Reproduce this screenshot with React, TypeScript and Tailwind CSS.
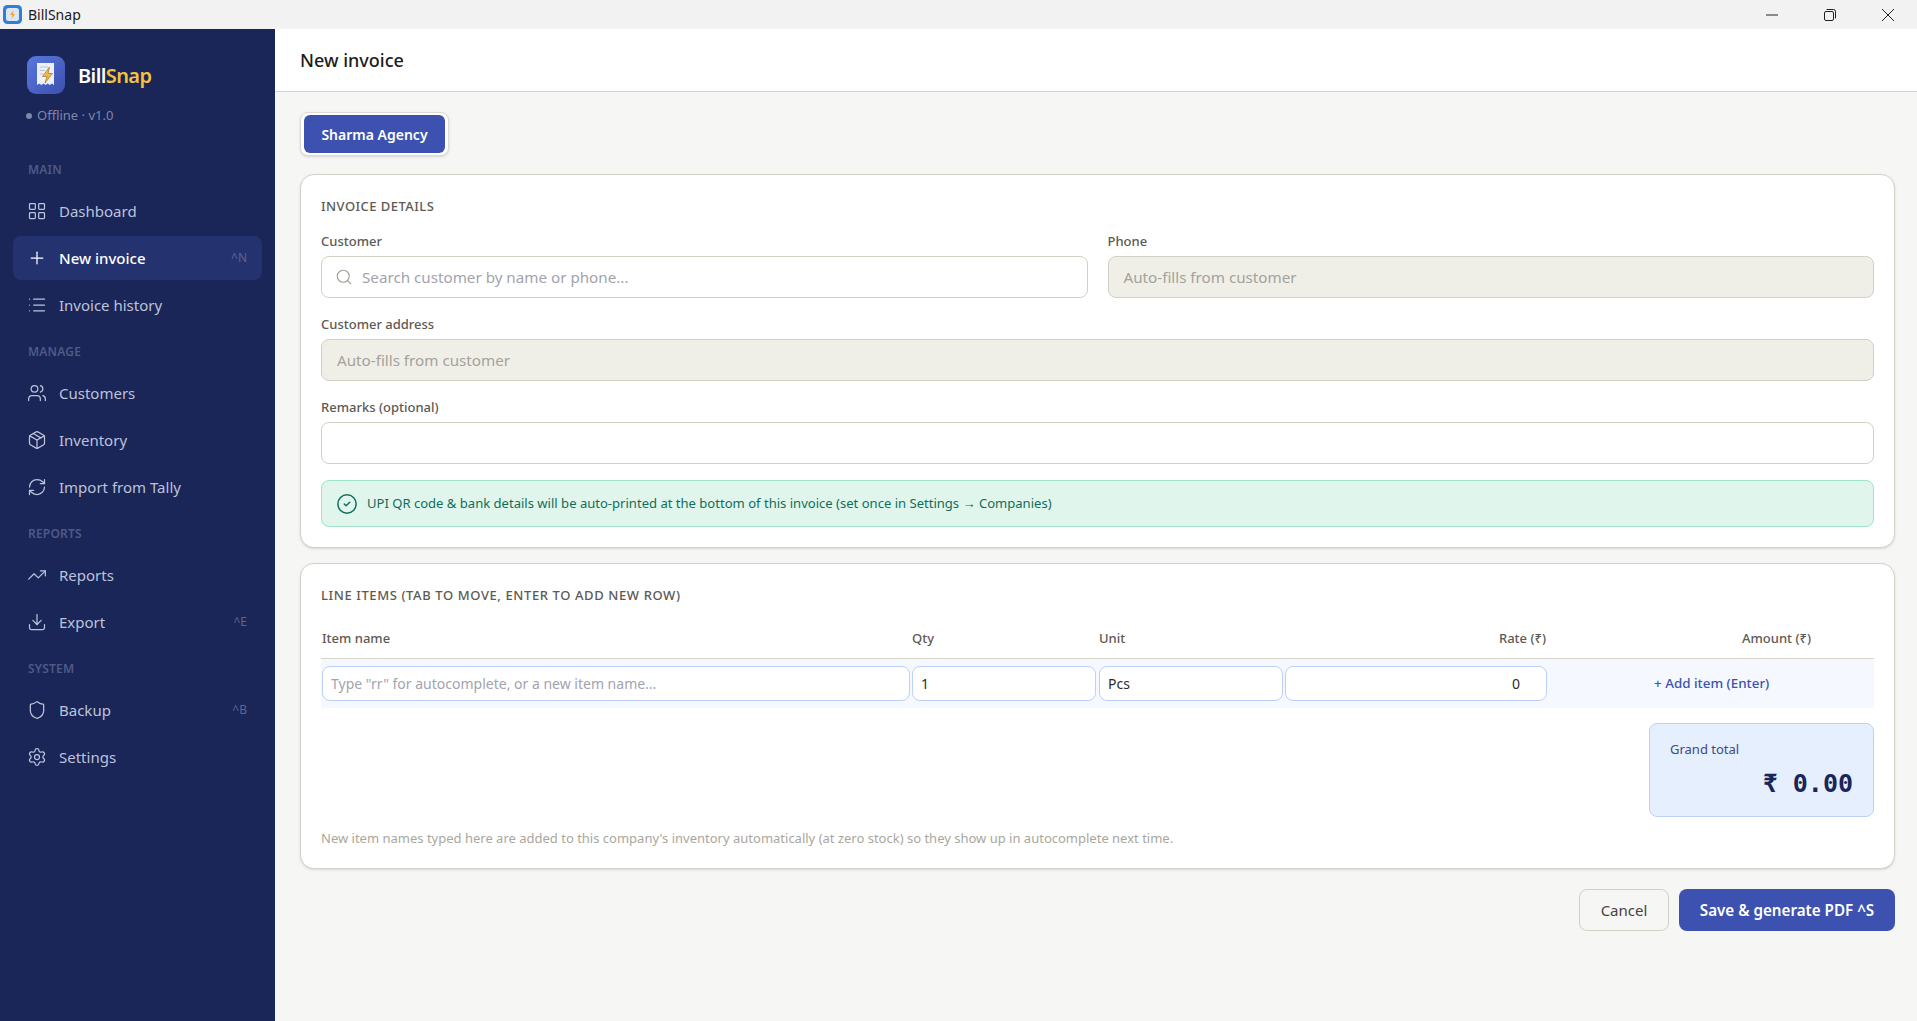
import React from "react";
import { LayoutGrid, Plus, List, Users, Package, RefreshCw, TrendingUp, Download, Shield, Settings, Search, CircleCheck } from "lucide-react";

const Logo = ({ size }: { size: number }) => (
  <svg width={size} height={size} viewBox="0 0 38 38">
    <defs>
      <linearGradient id={`g${size}`} x1="0" y1="0" x2="1" y2="1">
        <stop offset="0" stopColor="#5a78e0" />
        <stop offset="1" stopColor="#3c50ad" />
      </linearGradient>
    </defs>
    <rect width="38" height="38" rx="9" fill={`url(#g${size})`} />
    <path d="M10 7h17v22l-2.1-1.6-2.1 1.6-2.1-1.6-2.1 1.6-2.1-1.6-2.1 1.6L12 27.4 10 29z" fill="#eef0f8" />
    <path d="M13 11h8M13 14.5h5M13 18h3" stroke="#b9c2e0" strokeWidth="1.2" />
    <path d="M22.5 11 15.5 20.5h4.5l-2 6.5 7.5-9.5h-4.5z" fill="#f2bd3d" stroke="#8a6a1c" strokeWidth=".6" />
  </svg>
);

const AppIcon = () => (
  <svg width="19" height="19" viewBox="0 0 19 19">
    <rect width="19" height="19" rx="4.5" fill="#2f7fd6" />
    <rect x="3" y="3" width="13" height="13" rx="2.5" fill="#dbe7f6" />
    <path d="M10.5 5 7 10h2.4l-1 4 3.7-5H9.7z" fill="#e8a43a" />
  </svg>
);

type Item = { icon: React.ElementType; label: string; key?: string; active?: boolean };
const sections: { title: string; items: Item[] }[] = [
  { title: "MAIN", items: [
    { icon: LayoutGrid, label: "Dashboard" },
    { icon: Plus, label: "New invoice", key: "^N", active: true },
    { icon: List, label: "Invoice history" },
  ] },
  { title: "MANAGE", items: [
    { icon: Users, label: "Customers" },
    { icon: Package, label: "Inventory" },
    { icon: RefreshCw, label: "Import from Tally" },
  ] },
  { title: "REPORTS", items: [
    { icon: TrendingUp, label: "Reports" },
    { icon: Download, label: "Export", key: "^E" },
  ] },
  { title: "SYSTEM", items: [
    { icon: Shield, label: "Backup", key: "^B" },
    { icon: Settings, label: "Settings" },
  ] },
];

const Label = ({ children }: { children: React.ReactNode }) => (
  <div className="text-[13px] leading-[18px] font-medium text-[#5c5a54] mb-[6px]">{children}</div>
);

const fieldReadonly = "h-[42px] rounded-[8px] border border-[#d1d0c5] bg-[#f0efe7] px-[15px] flex items-center text-[15.2px] text-[#a3a29c]";

const cellInput = "h-[35px] rounded-[8px] border border-[#bcd0f8] bg-white flex items-center text-[14px]";

export default function App() {
  return (
    <div className="w-[1917px] h-[1021px] flex flex-col overflow-hidden font-['Noto_Sans',sans-serif] bg-[#f6f6f4]">
      <div className="h-[29px] shrink-0 bg-[#f2f2f2] flex items-center">
        <div className="ml-[3px] w-[19px] h-[19px]"><AppIcon /></div>
        <span className="ml-[6px] text-[14px] text-[#1a1a1a]">BillSnap</span>
        <div className="ml-auto flex items-center">
          <div className="w-[58px] flex justify-center">
            <svg width="12" height="12" viewBox="0 0 12 12" stroke="#222" strokeWidth="1"><path d="M0 6h12" /></svg>
          </div>
          <div className="w-[58px] flex justify-center">
            <svg width="12" height="12" viewBox="0 0 12 12" fill="none" stroke="#222" strokeWidth="1">
              <rect x="0.5" y="2.5" width="9" height="9" rx="1.5" />
              <path d="M2.6.5h6.9a2 2 0 0 1 2 2v6.9" />
            </svg>
          </div>
          <div className="w-[58px] flex justify-center">
            <svg width="12" height="12" viewBox="0 0 12 12" stroke="#222" strokeWidth="1"><path d="M0 0l12 12M12 0L0 12" /></svg>
          </div>
        </div>
      </div>
      <div className="flex-1 flex min-h-0">
        <aside className="w-[275px] shrink-0 bg-[#1a2558] px-[13px] pt-[27px]">
          <div className="flex items-center gap-[13px] pl-[14px]">
            <Logo size={38} />
            <span className="text-[20px] font-semibold tracking-[-0.6px] leading-[38px] translate-y-[1px] text-white">Bill<span className="text-[#f5c23e]">Snap</span></span>
          </div>
          <div className="flex items-center gap-[5px] pl-[13px] mt-[13px] h-[18px] text-[13px] text-[#7e87a8]">
            <span className="w-[6px] h-[6px] rounded-full bg-[#7e87a8]" />Offline · v1.0
          </div>
          <div className="mt-[23px]">
            {sections.map((s, i) => (
              <div key={s.title}>
                <div className={`pl-[15px] h-[16px] leading-[16px] text-[12px] font-semibold tracking-[0.2px] text-[#4e5a87] ${i === 0 ? "mt-[37px] mb-[11px]" : "mt-[17px] mb-[11px]"}`}>{s.title}</div>
                {s.items.map((it) => {
                  const Icon = it.icon;
                  return (
                    <div key={it.label} className={`h-[44px] mb-[3px] rounded-[8px] flex items-center pl-[14px] pr-[15px] ${it.active ? "bg-[#243270] text-white" : "text-[#bcc3da]"}`}>
                      <Icon size={20} strokeWidth={1.5} className="shrink-0" />
                      <span className={`ml-[12px] text-[15px] ${it.active ? "font-medium" : ""}`}>{it.label}</span>
                      {it.key && <span className="ml-auto text-[12px] text-[#5a6690]">{it.key}</span>}
                    </div>
                  );
                })}
              </div>
            ))}
          </div>
        </aside>
        <main className="flex-1 min-w-0">
          <header className="h-[63px] bg-white border-b border-[#d4d3c9] flex items-center pl-[25px]">
            <h1 className="text-[18px] font-medium text-[#1c1c1a]">New invoice</h1>
          </header>
          <div className="px-[25px] pr-[22px] pt-[20px]">
            <div className="inline-flex px-[3px] py-[2px] rounded-[8px] bg-white border border-[#dcdbd3] shadow-sm align-top">
              <div className="h-[38px] w-[141px] rounded-[6px] bg-[#3d52b0] text-white text-[14px] font-semibold flex items-center justify-center">Sharma Agency</div>
            </div>
            <section className="mt-[18px] h-[374px] rounded-[14px] bg-white border border-[#d4d3c9] shadow-sm px-[20px] pt-[19px]">
              <div className="text-[13px] leading-[24px] font-medium tracking-[0.45px] text-[#5c5a54]">INVOICE DETAILS</div>
              <div className="grid grid-cols-2 gap-x-[20px] mt-[14px]">
                <div>
                  <Label>Customer</Label>
                  <div className="h-[42px] rounded-[8px] border border-[#d1d0c5] bg-white flex items-center pl-[13px]">
                    <Search size={18} strokeWidth={1.5} className="text-[#a3a29c]" />
                    <span className="ml-[9px] text-[15.2px] text-[#a3a3ae]">Search customer by name or phone...</span>
                  </div>
                </div>
                <div>
                  <Label>Phone</Label>
                  <div className={fieldReadonly}>Auto-fills from customer</div>
                </div>
              </div>
              <div className="mt-[17px]">
                <Label>Customer address</Label>
                <div className={fieldReadonly}>Auto-fills from customer</div>
              </div>
              <div className="mt-[17px]">
                <Label>Remarks (optional)</Label>
                <div className="h-[42px] rounded-[8px] border border-[#d1d0c5] bg-white" />
              </div>
              <div className="mt-[16px] h-[47px] rounded-[8px] border border-[#9fe3c9] bg-[#e0f6ed] flex items-center pl-[14px] text-[13.05px] text-[#0f6e5a]">
                <CircleCheck size={22} strokeWidth={1.6} />
                <span className="ml-[9px]">UPI QR code &amp; bank details will be auto-printed at the bottom of this invoice (set once in Settings → Companies)</span>
              </div>
            </section>
            <section className="mt-[15px] h-[306px] rounded-[14px] bg-white border border-[#d4d3c9] shadow-sm px-[20px] pt-[19px]">
              <div className="text-[13px] leading-[24px] font-medium tracking-[0.6px] text-[#5c5a54]">LINE ITEMS (TAB TO MOVE, ENTER TO ADD NEW ROW)</div>
              <div className="mt-[12px] h-[40px] border-b border-[#d4d3c9] grid grid-cols-[590px_187px_187px_262px_1fr] items-center text-[13px] font-medium text-[#5c5a54]">
                <div className="pl-[1px]">Item name</div>
                <div className="pl-[1px]">Qty</div>
                <div className="pl-[1px]">Unit</div>
                <div className="text-right pr-[1px]">Rate (₹)</div>
                <div className="text-right pr-[63px]">Amount (₹)</div>
              </div>
              <div className="h-[49px] bg-[#f5f8ff] grid grid-cols-[590px_187px_187px_262px_1fr] items-center">
                <div className="pl-[1px] pr-[1px]"><div className={`${cellInput} pl-[8px] text-[#a3a3ae]`}>Type "rr" for autocomplete, or a new item name...</div></div>
                <div className="pl-[1px] pr-[2px]"><div className={`${cellInput} pl-[8px] text-[#2a2a28]`}>1</div></div>
                <div className="pl-[1px] pr-[2px]"><div className={`${cellInput} pl-[8px] text-[13.5px] text-[#2a2a28]`}>Pcs</div></div>
                <div><div className={`${cellInput} justify-end pr-[26px] text-[#2a2a28]`}>0</div></div>
                <div className="pl-[107px] text-[13.4px] font-medium text-[#3d52b0] whitespace-nowrap">+ Add item (Enter)</div>
              </div>
              <div className="flex justify-end mt-[15px]">
                <div className="w-[225px] h-[94px] rounded-[8px] border border-[#bcd0f8] bg-[#e6effd] pl-[20px] pr-[20px] pt-[16px]">
                  <div className="text-[13px] leading-[18px] text-[#3d4a86]">Grand total</div>
                  <div className="mt-[10px] text-right text-[25px] leading-[32px] font-bold text-[#1a2558] font-['DejaVu_Sans_Mono',monospace] whitespace-nowrap">₹ 0.00</div>
                </div>
              </div>
              <div className="mt-[12px] text-[13px] leading-[18px] text-[#a8a79d]">New item names typed here are added to this company's inventory automatically (at zero stock) so they show up in autocomplete next time.</div>
            </section>
            <div className="mt-[20px] flex justify-end gap-[10px]">
              <div className="h-[42px] w-[90px] rounded-[8px] border border-[#d1d0c5] bg-[#f6f6f4] flex items-center justify-center text-[15px] text-[#44443f]">Cancel</div>
              <div className="h-[42px] w-[216px] rounded-[8px] bg-[#3d52b0] flex items-center justify-center text-[15.2px] font-semibold text-white">Save &amp; generate PDF ^S</div>
            </div>
          </div>
        </main>
      </div>
    </div>
  );
}
